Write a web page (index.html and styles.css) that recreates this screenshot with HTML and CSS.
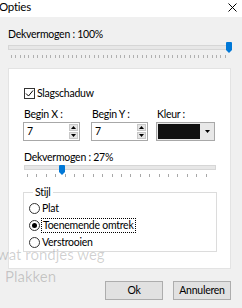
FILE: index.html
```html
<!DOCTYPE html>
<html lang="nl">
<head>
  <meta charset="UTF-8" />
  <title>Opties</title>
  <link rel="stylesheet" href="styles.css">
</head>
<body>
  <div class="dialog">
    <div class="titlebar">
      <span class="title">Opties</span>
      <svg class="close" width="9" height="9" viewBox="0 0 9 9">
        <path d="M0.5 0.5 L8.5 8.5 M8.5 0.5 L0.5 8.5" stroke="#000" stroke-width="1" fill="none"/>
      </svg>
    </div>

    <div class="main">
      <div class="label first">Dekvermogen : 100%</div>
      <div class="trackbar wide">
        <div class="track"></div>
        <svg class="thumb" style="left: 218px" width="6" height="11" viewBox="0 0 6 11">
          <path d="M0 1 Q0 0 1 0 H5 Q6 0 6 1 V8 L3 11 L0 8 Z" fill="#0078d7"/>
        </svg>
      </div>
      <div class="ticks dense"></div>

      <div class="panel">
        <label class="check-row">
          <span class="checkbox">
            <svg width="9" height="9" viewBox="0 0 9 9">
              <path d="M1 4.5 L3.5 7 L8 1.5" stroke="#000" stroke-width="1" fill="none"/>
            </svg>
          </span>
          Slagschaduw
        </label>

        <div class="fields">
          <div class="field">
            <div class="label">Begin X :</div>
            <div class="spinbox">
              <span class="value">7</span>
              <span class="spin">
                <span class="spin-btn"><svg width="5" height="3" viewBox="0 0 5 3"><path d="M0 3 L2.5 0 L5 3 Z" fill="#000"/></svg></span>
                <span class="spin-btn"><svg width="5" height="3" viewBox="0 0 5 3"><path d="M0 0 L2.5 3 L5 0 Z" fill="#000"/></svg></span>
              </span>
            </div>
          </div>
          <div class="field">
            <div class="label">Begin Y :</div>
            <div class="spinbox">
              <span class="value">7</span>
              <span class="spin">
                <span class="spin-btn"><svg width="5" height="3" viewBox="0 0 5 3"><path d="M0 3 L2.5 0 L5 3 Z" fill="#000"/></svg></span>
                <span class="spin-btn"><svg width="5" height="3" viewBox="0 0 5 3"><path d="M0 0 L2.5 3 L5 0 Z" fill="#000"/></svg></span>
              </span>
            </div>
          </div>
          <div class="field colour">
            <div class="label">Kleur :</div>
            <div class="combo">
              <span class="swatch"></span>
              <span class="drop"><svg width="5" height="3" viewBox="0 0 5 3"><path d="M0 0 L2.5 3 L5 0 Z" fill="#000"/></svg></span>
            </div>
          </div>
        </div>

        <div class="label second">Dekvermogen : 27%</div>
        <div class="trackbar narrow">
          <div class="track"></div>
          <svg class="thumb" style="left: 35px" width="6" height="10" viewBox="0 0 6 10">
            <path d="M0 1 Q0 0 1 0 H5 Q6 0 6 1 V7 L3 10 L0 7 Z" fill="#0078d7"/>
          </svg>
        </div>
        <div class="ticks sparse"></div>

        <fieldset class="group">
          <legend>Stijl</legend>
          <div class="radio-row"><span class="radio"></span>Plat</div>
          <div class="radio-row"><span class="radio on"></span><span class="focus">Toenemende omtrek</span></div>
          <div class="radio-row"><span class="radio"></span>Verstrooien</div>
        </fieldset>
      </div>

      <div class="buttons">
        <button class="btn">Ok</button>
        <button class="btn">Annuleren</button>
      </div>
    </div>

    <div class="ghost">
      <span class="ghost-line one">wat rondjes weg</span>
      <span class="ghost-line two">Plakken</span>
    </div>
  </div>
</body>
</html>
```

FILE: styles.css
```css
body {
  margin: 0;
  font-family: Lato, "Noto Sans", sans-serif;
  font-size: 10.5px;
  letter-spacing: -0.25px;
  color: #000;
  background: #f0f0f0;
}

.dialog {
  position: relative;
  width: 242px;
  height: 308px;
  overflow: hidden;
  background: #f0f0f0;
}

.titlebar {
  height: 17px;
  background: #fff;
  display: flex;
  justify-content: space-between;
  align-items: flex-start;
}

.title {
  margin-left: -1px;
  font-size: 11.5px;
  line-height: 15px;
  margin-top: -1px;
}

.close {
  margin-right: 5px;
  margin-top: 3px;
}

.main {
  padding: 0 11px 0 8px;
}

.label {
  line-height: 15px;
  white-space: nowrap;
}

.label.first {
  margin-top: 10px;
}

.trackbar {
  position: relative;
  height: 11px;
  padding-top: 3px;
  box-sizing: border-box;
}

.track {
  height: 3px;
  border: 1px solid #d6d6d6;
  background: #e7e7e7;
}

.thumb {
  position: absolute;
  top: 0;
}

.trackbar.narrow {
  margin: -2px 1px 0 1px;
  padding-top: 2px;
}

.trackbar.narrow .thumb {
  top: 2px;
}

.ticks {
  margin-top: 2px;
  height: 3px;
}

.ticks.dense {
  margin-left: 3px;
  margin-right: 3px;
  background: repeating-linear-gradient(to right, #b0b0b0 0 1px, transparent 1px 4.36px);
}

.ticks.sparse {
  margin: 0 3px 0 4px;
  background: repeating-linear-gradient(to right, #a8a8a8 0 1px, transparent 1px 9.4px);
}

.panel {
  margin-top: 10px;
  height: 201px;
  box-sizing: border-box;
  background: #fff;
  border: 1px solid #e3e3e3;
  padding: 19px 13px 0 14px;
}

.check-row {
  display: flex;
  align-items: center;
  gap: 2px;
  height: 11px;
  margin-left: 1px;
  line-height: 15px;
}

.checkbox {
  width: 9px;
  height: 9px;
  border: 1px solid #333;
  background: #fff;
  display: flex;
}

.fields {
  display: flex;
  gap: 11px;
  margin-top: 8px;
}

.field.colour {
  margin-left: -3px;
}

.field .label {
  margin-left: 1px;
}

.spinbox {
  width: 57px;
  height: 19px;
  box-sizing: border-box;
  border: 1px solid #a8a8a8;
  background: #fff;
  display: flex;
  justify-content: space-between;
}

.value {
  padding-left: 3px;
  line-height: 17px;
}

.spin {
  display: flex;
  flex-direction: column;
  gap: 1px;
  padding: 1px;
}

.spin-btn {
  width: 9px;
  flex: 1;
  background: #e5e5e5;
  border: 1px solid #c8c8c8;
  box-sizing: border-box;
  display: flex;
  align-items: center;
  justify-content: center;
}

.combo {
  width: 59px;
  height: 19px;
  box-sizing: border-box;
  border: 1px solid #a8a8a8;
  background: #e8e8e8;
  display: flex;
  padding: 1px;
  gap: 1px;
}

.swatch {
  flex: 1;
  background: #111;
}

.drop {
  width: 12px;
  display: flex;
  align-items: center;
  justify-content: center;
}

.label.second {
  margin-top: 9px;
  margin-left: 1px;
}

.group {
  margin: 8px 0 0 0;
  padding: 0 0 0 5px;
  border: 1px solid #dcdcdc;
  width: 194px;
  box-sizing: border-box;
}

.group legend {
  padding: 0 2px;
  margin-left: 4px;
  line-height: 15px;
}

.radio-row {
  display: flex;
  align-items: center;
  gap: 2px;
  height: 17px;
  line-height: 15px;
}

.radio {
  width: 9px;
  height: 9px;
  border: 1px solid #333;
  border-radius: 50%;
  display: flex;
  align-items: center;
  justify-content: center;
  background: #fff;
}

.radio.on::after {
  content: "";
  width: 5px;
  height: 5px;
  border-radius: 50%;
  background: #000;
}

.focus {
  outline: 1px dotted #000;
  padding: 0 1px;
  line-height: 13px;
}

.buttons {
  display: flex;
  justify-content: flex-end;
  gap: 10px;
  margin-top: 12px;
}

.btn {
  width: 58px;
  height: 19px;
  padding: 0;
  font-family: inherit;
  font-size: 10.5px;
  letter-spacing: -0.25px;
  color: #000;
  background: #e1e1e1;
  border: 1px solid #adadad;
  line-height: 15px;
}

.ghost {
  position: absolute;
  left: 0;
  top: 0;
  width: 100%;
  height: 100%;
  pointer-events: none;
  font-size: 15px;
  letter-spacing: 0;
  color: rgba(0, 0, 0, 0.19);
}

.ghost-line {
  position: absolute;
  white-space: nowrap;
  line-height: 20px;
}

.ghost-line.one {
  left: -3px;
  top: 244px;
}

.ghost-line.two {
  left: 5px;
  top: 266px;
}
```
